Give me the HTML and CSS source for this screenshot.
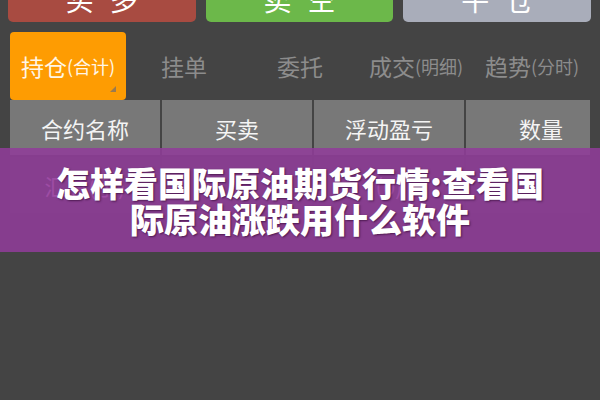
FILE: index.html
```html
<!DOCTYPE html>
<html lang="zh">
<head>
<meta charset="utf-8">
<link rel="stylesheet" href="styles.css">
</head>
<body>
<div class="page">
  <div class="actions">
    <div class="btn btn-buy">买多</div>
    <div class="btn btn-sell">卖空</div>
    <div class="btn btn-close">平仓</div>
  </div>
  <div class="tabs">
    <div class="tab active">持仓<small>(合计)</small><span class="corner"></span></div>
    <div class="tab">挂单</div>
    <div class="tab">委托</div>
    <div class="tab">成交<small>(明细)</small></div>
    <div class="tab">趋势<small>(分时)</small></div>
  </div>
  <div class="table">
    <div class="cell head">合约名称</div>
    <div class="cell head">买卖</div>
    <div class="cell head">浮动盈亏</div>
    <div class="cell head last">数量</div>
    <div class="cell data">汇总(手)</div>
    <div class="cell data"></div>
    <div class="cell data">(0)</div>
    <div class="cell data last"></div>
  </div>
  <div class="banner">
    <h1>怎样看国际原油期货行情:查看国<br>际原油涨跌用什么软件</h1>
  </div>
</div>
</body>
</html>
```
FILE: styles.css
```css
* { box-sizing: border-box; }
html, body {
  margin: 0;
  padding: 0;
  background: #444444;
  width: 600px;
  height: 400px;
  overflow: hidden;
  font-family: "Noto Sans CJK SC", "Noto Sans", sans-serif;
}
.page {
  position: relative;
  display: flow-root;
  width: 600px;
  height: 400px;
}
.actions {
  display: grid;
  grid-template-columns: 1fr 1fr 1fr;
  column-gap: 10px;
  padding: 0 9px 0 8px;
  margin-top: -26px;
}
.btn {
  height: 48px;
  border-radius: 5px;
  display: flex;
  align-items: center;
  justify-content: center;
  padding-top: 2px;
  color: #ffffff;
  font-size: 28px;
  letter-spacing: 16px;
  text-indent: 16px;
}
.btn-buy { background: #a84b41; }
.btn-sell { background: #6cb84a; }
.btn-close { background: #a9adba; }

.tabs {
  display: grid;
  grid-template-columns: repeat(5, 116px);
  padding-left: 10px;
  margin-top: 10px;
  height: 68px;
}
.tab {
  display: flex;
  align-items: center;
  justify-content: center;
  font-size: 23px;
  color: #8c8c8c;
  white-space: nowrap;
  position: relative;
}
.tab small {
  font-size: 18px;
}
.tab.active {
  background: #fe9c02;
  color: #fff6e6;
  border-radius: 4px;
}
.corner {
  position: absolute;
  right: 10px;
  bottom: 8px;
  width: 0;
  height: 0;
  border-left: 6px solid transparent;
  border-bottom: 6px solid #9a7a50;
}
.table {
  display: grid;
  grid-template-columns: 150px 150px 150px 1fr;
  column-gap: 2px;
  padding: 0 10px;
}
.cell {
  display: flex;
  align-items: center;
  justify-content: center;
  font-size: 22px;
}
.head {
  height: 55px;
  background: #787878;
  color: #f4f4f4;
}
.head.last {
  padding-left: 26px;
}
.data {
  height: 58px;
  background: #4a4a4a;
  color: #ffc0f0;
  border-top: 2px solid #444;
}
.banner {
  position: absolute;
  left: 0;
  top: 148px;
  width: 600px;
  height: 104px;
  background: rgba(143, 60, 152, 0.88);
  display: flex;
  align-items: center;
  justify-content: center;
}
.banner h1 {
  margin: 0;
  padding-top: 2px;
  color: #ffffff;
  font-size: 34px;
  font-weight: 900;
  line-height: 36px;
  text-align: center;
  text-shadow: 1px 1px 2px rgba(40, 0, 40, 0.6);
}
```
